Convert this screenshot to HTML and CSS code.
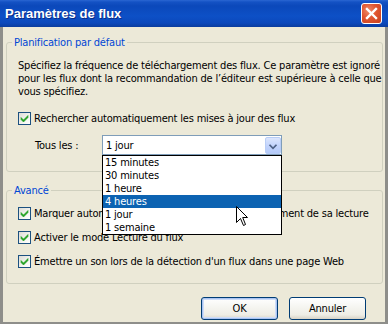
FILE: index.html
```html
<!DOCTYPE html>
<html lang="fr">
<head>
<meta charset="utf-8">
<title>Paramètres de flux</title>
<link rel="stylesheet" href="styles.css">
</head>
<body>
<div class="window">
  <div class="titlebar">
    <span class="title">Paramètres de flux</span>
    <span class="close"><svg width="19" height="19" viewBox="0 0 19 19"><path d="M5 5 L14 14 M14 5 L5 14" stroke="#fff" stroke-width="2.4" stroke-linecap="square"/></svg></span>
  </div>
  <div class="client">
    <fieldset class="group group-schedule">
      <legend>Planification par défaut</legend>
      <p class="desc">Spécifiez la fréquence de téléchargement des flux. Ce paramètre est ignoré<br>pour les flux dont la recommandation de l’éditeur est supérieure à celle que<br>vous spécifiez.</p>
      <div class="check check-first"><span class="box"><svg width="11" height="11" viewBox="0 0 11 11"><path d="M2 4.5 L4.5 7 L9 2.5 L9 4.5 L4.5 9 L2 6.5 Z" fill="#21A121" stroke="#21A121" stroke-width="0.6"/></svg></span><span>Rechercher automatiquement les mises à jour des flux</span></div>
      <div class="interval">
        <span class="interval-label">Tous les :</span>
        <div class="combo">
          <span class="combo-value">1 jour</span>
          <span class="combo-btn"><svg width="16" height="17" viewBox="0 0 16 17"><path d="M4 6.5 L8 10.5 L12 6.5" fill="none" stroke="#4D6185" stroke-width="2"/></svg></span>
          <ul class="combo-list">
            <li>15 minutes</li>
            <li>30 minutes</li>
            <li>1 heure</li>
            <li class="selected">4 heures</li>
            <li>1 jour</li>
            <li>1 semaine</li>
          </ul>
          <svg class="cursor" width="13" height="21" viewBox="0 0 13 21"><path d="M0.5 0.5 L0.5 16.5 L4.5 12.5 L7.5 19.5 L9.5 18.5 L6.7 11.5 L11.5 11.5 Z" fill="#fff" stroke="#000" stroke-width="1" stroke-linejoin="miter"/></svg>
        </div>
      </div>
    </fieldset>
    <fieldset class="group group-advanced">
      <legend>Avancé</legend>
      <div class="checks">
        <div class="check"><span class="box"><svg width="11" height="11" viewBox="0 0 11 11"><path d="M2 4.5 L4.5 7 L9 2.5 L9 4.5 L4.5 9 L2 6.5 Z" fill="#21A121" stroke="#21A121" stroke-width="0.6"/></svg></span><span>Marquer automatiquement le flux comme lu au moment de sa lecture</span></div>
        <div class="check"><span class="box"><svg width="11" height="11" viewBox="0 0 11 11"><path d="M2 4.5 L4.5 7 L9 2.5 L9 4.5 L4.5 9 L2 6.5 Z" fill="#21A121" stroke="#21A121" stroke-width="0.6"/></svg></span><span>Activer le mode Lecture du flux</span></div>
        <div class="check"><span class="box"><svg width="11" height="11" viewBox="0 0 11 11"><path d="M2 4.5 L4.5 7 L9 2.5 L9 4.5 L4.5 9 L2 6.5 Z" fill="#21A121" stroke="#21A121" stroke-width="0.6"/></svg></span><span>Émettre un son lors de la détection d'un flux dans une page Web</span></div>
      </div>
    </fieldset>
    <div class="buttons">
      <button class="btn btn-default">OK</button>
      <button class="btn">Annuler</button>
    </div>
  </div>
</div>
</body>
</html>
```
FILE: styles.css
```css
html, body {
  margin: 0;
  padding: 0;
}
body {
  width: 388px;
  height: 324px;
  overflow: hidden;
  font-family: "DejaVu Sans Condensed", "DejaVu Sans", sans-serif;
  font-stretch: condensed;
  font-size: 11px;
  letter-spacing: -0.19px;
  color: #000;
}
.window {
  display: flex;
  flex-direction: column;
  height: 324px;
}
.titlebar {
  flex: none;
  height: 27px;
  box-sizing: border-box;
  display: flex;
  align-items: flex-start;
  justify-content: space-between;
  padding: 0 6px 0 5px;
  background: linear-gradient(to bottom, #2A66D2 0px, #1452C4 2px, #0B48BA 6px, #0D50C6 16px, #0B48BC 23px, #0A3C9E 27px);
}
.title {
  font-family: "Liberation Sans", Arial, sans-serif;
  font-stretch: normal;
  color: #fff;
  font-weight: bold;
  font-size: 13px;
  letter-spacing: 0;
  line-height: 16px;
  margin-top: 6px;
  text-shadow: 1px 1px 0 #0B2C86;
}
.close {
  margin-top: 3px;
  width: 21px;
  height: 21px;
  box-sizing: border-box;
  border: 1px solid #fff;
  border-radius: 3px;
  background: radial-gradient(circle at 35% 35%, #EE8A6A 0%, #E0552F 45%, #C8401D 100%);
  display: flex;
  align-items: center;
  justify-content: center;
}
.client {
  flex: 1;
  background: #ECE9D8;
  border-style: solid;
  border-color: #8E8E8A;
  border-width: 0 3px 2px 3px;
  padding: 9px 2px 0 3px;
  display: flex;
  flex-direction: column;
}
.group {
  margin: 0;
  border: 1px solid #D0D0BF;
  border-radius: 3px;
  min-width: 0;
}
.group legend {
  padding: 0 2px;
  margin-left: -6px;
  color: #0046D5;
  line-height: 13px;
}
.group-schedule {
  padding: 10px 10px 16px 11px;
}
.group-advanced {
  margin-top: 12px;
  padding: 10px 10px 15px 11px;
}
.desc {
  margin: 0;
  line-height: 13px;
  white-space: nowrap;
}
.check {
  display: flex;
  align-items: center;
  gap: 3px;
  height: 13px;
  line-height: 13px;
  white-space: nowrap;
}
.check-first {
  margin-top: 14px;
}
.box {
  flex: none;
  width: 13px;
  height: 13px;
  box-sizing: border-box;
  border: 1px solid #1C5180;
  background: linear-gradient(135deg, #DCDCD5 0%, #F4F4F0 60%, #FFFFFF 100%);
  display: flex;
}
.checks {
  display: flex;
  flex-direction: column;
  gap: 11px;
}
.interval {
  display: flex;
  align-items: center;
  margin-top: 10px;
}
.interval-label {
  width: 67px;
  margin-left: 17px;
  white-space: nowrap;
}
.combo {
  position: relative;
  width: 180px;
  height: 20px;
  box-sizing: border-box;
  border: 1px solid #7F9DB9;
  background: #fff;
  display: flex;
  align-items: center;
}
.combo-value {
  flex: 1;
  padding-left: 3px;
}
.combo-btn {
  width: 16px;
  height: 17px;
  box-sizing: border-box;
  border: 1px solid #B8CDF6;
  border-radius: 2px;
  background: linear-gradient(to bottom, #DCE6FD 0%, #C3D4FC 50%, #B4CAF9 100%);
  display: flex;
}
.combo-list {
  position: absolute;
  left: -1px;
  top: 19px;
  width: 180px;
  box-sizing: border-box;
  margin: 0;
  padding: 0;
  list-style: none;
  border: 1px solid #000;
  background: #fff;
  z-index: 2;
}
.combo-list li {
  height: 13px;
  line-height: 13px;
  padding-left: 2px;
  white-space: nowrap;
}
.combo-list li.selected {
  background: #0C63B2;
  color: #fff;
}
.cursor {
  position: absolute;
  left: 133px;
  top: 70px;
  z-index: 3;
}
.buttons {
  display: flex;
  justify-content: flex-end;
  gap: 11px;
  margin-top: 13px;
  margin-right: 17px;
}
.btn {
  width: 77px;
  height: 23px;
  box-sizing: border-box;
  border: 1px solid #003C74;
  border-radius: 3px;
  background: linear-gradient(to bottom, #FFFFFF 0%, #F6F6F2 40%, #EEEDE5 80%, #D8D3C6 100%);
  font-family: inherit;
  font-stretch: inherit;
  font-size: 11px;
  letter-spacing: -0.19px;
  color: #000;
  padding: 0;
}
.btn-default {
  box-shadow: inset 0 0 0 1px #A9C3F1, inset 0 0 0 2px #CEDDF8;
}
```
